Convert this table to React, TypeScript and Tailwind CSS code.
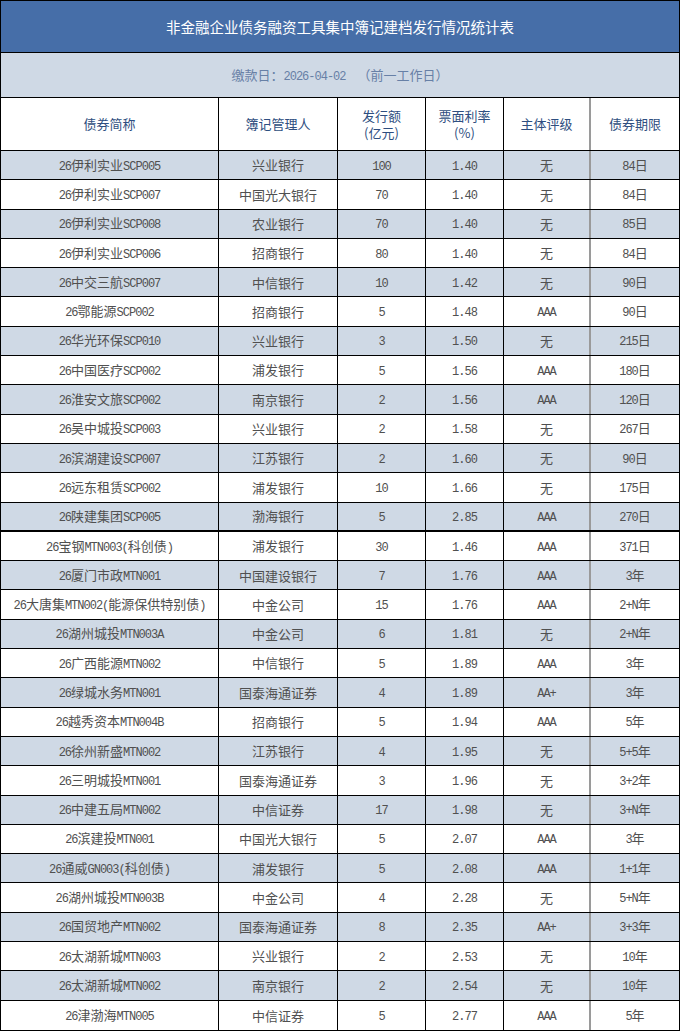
import React from "react";

type Row = [string, string, string, string, string, string];

const rows: Row[] = [
  ["26伊利实业SCP005", "兴业银行", "100", "1.40", "无", "84日"],
  ["26伊利实业SCP007", "中国光大银行", "70", "1.40", "无", "84日"],
  ["26伊利实业SCP008", "农业银行", "70", "1.40", "无", "85日"],
  ["26伊利实业SCP006", "招商银行", "80", "1.40", "无", "84日"],
  ["26中交三航SCP007", "中信银行", "10", "1.42", "无", "90日"],
  ["26鄂能源SCP002", "招商银行", "5", "1.48", "AAA", "90日"],
  ["26华光环保SCP010", "兴业银行", "3", "1.50", "无", "215日"],
  ["26中国医疗SCP002", "浦发银行", "5", "1.56", "AAA", "180日"],
  ["26淮安文旅SCP002", "南京银行", "2", "1.56", "AAA", "120日"],
  ["26吴中城投SCP003", "兴业银行", "2", "1.58", "无", "267日"],
  ["26滨湖建设SCP007", "江苏银行", "2", "1.60", "无", "90日"],
  ["26远东租赁SCP002", "浦发银行", "10", "1.66", "无", "175日"],
  ["26陕建集团SCP005", "渤海银行", "5", "2.85", "AAA", "270日"],
  ["26宝钢MTN003(科创债)", "浦发银行", "30", "1.46", "AAA", "371日"],
  ["26厦门市政MTN001", "中国建设银行", "7", "1.76", "AAA", "3年"],
  ["26大唐集MTN002(能源保供特别债)", "中金公司", "15", "1.76", "AAA", "2+N年"],
  ["26湖州城投MTN003A", "中金公司", "6", "1.81", "无", "2+N年"],
  ["26广西能源MTN002", "中信银行", "5", "1.89", "AAA", "3年"],
  ["26绿城水务MTN001", "国泰海通证券", "4", "1.89", "AA+", "3年"],
  ["26越秀资本MTN004B", "招商银行", "5", "1.94", "AAA", "5年"],
  ["26徐州新盛MTN002", "江苏银行", "4", "1.95", "无", "5+5年"],
  ["26三明城投MTN001", "国泰海通证券", "3", "1.96", "无", "3+2年"],
  ["26中建五局MTN002", "中信证券", "17", "1.98", "无", "3+N年"],
  ["26滨建投MTN001", "中国光大银行", "5", "2.07", "AAA", "3年"],
  ["26通威GN003(科创债)", "浦发银行", "5", "2.08", "AAA", "1+1年"],
  ["26湖州城投MTN003B", "中金公司", "4", "2.28", "无", "5+N年"],
  ["26国贸地产MTN002", "国泰海通证券", "8", "2.35", "AA+", "3+3年"],
  ["26太湖新城MTN003", "兴业银行", "2", "2.53", "无", "10年"],
  ["26太湖新城MTN002", "南京银行", "2", "2.54", "无", "10年"],
  ["26津渤海MTN005", "中信证券", "5", "2.77", "AAA", "5年"],
];

// latin runs get a narrow mono face, like the half-width glyphs of the sheet
const txt = (s: string) =>
  s.split(/([\x00-\x7f]+)/).map((p, i) =>
    /^[\x00-\x7f]+$/.test(p) ? (
      <span key={i} className="font-['Liberation_Mono',monospace] text-[12px] tracking-[-1px]">
        {p}
      </span>
    ) : (
      p
    )
  );

const cols = "grid grid-cols-[218px_119px_88px_78px_87px_88px]";

const Cell: React.FC<{ i: number; children: React.ReactNode }> = ({ i, children }) => (
  <div
    className={
      "flex items-center justify-center text-center " +
      (i === 4 ? "border-r-2 border-r-[#9a9a9a]" : i === 5 ? "" : "border-r border-r-black")
    }
  >
    {children}
  </div>
);

export default function App() {
  return (
    <div className="w-[680px] border border-black font-['Noto_Sans_CJK_SC',sans-serif] text-[13px] text-[#505050]">
      <div className="h-[52px] flex items-center justify-center bg-[#466ea8] border-b border-black text-white text-[14.5px]">
        非金融企业债务融资工具集中簿记建档发行情况统计表
      </div>
      <div className="h-[45px] flex items-center justify-center bg-[#cfd9e5] border-b border-black text-[#6780a6] text-[13px]">
        <span>缴款日：{txt("2026-04-02")}</span>
        <span className="ml-3">（前一工作日）</span>
      </div>
      <div className={cols + " h-[53px] border-b border-black text-[#2e4e80] text-[13px]"}>
        <Cell i={0}>债券简称</Cell>
        <Cell i={1}>簿记管理人</Cell>
        <Cell i={2}>
          <div className="flex flex-col leading-[17px]">
            <span>发行额</span>
            <span>(亿元)</span>
          </div>
        </Cell>
        <Cell i={3}>
          <div className="flex flex-col leading-[17px]">
            <span>票面利率</span>
            <span>(%)</span>
          </div>
        </Cell>
        <Cell i={4}>主体评级</Cell>
        <Cell i={5}>债券期限</Cell>
      </div>
      {rows.map((r, ri) => (
        <div
          key={ri}
          className={
            cols +
            " h-[29.3px] " +
            (ri === 12 ? "border-b-2 " : ri === rows.length - 1 ? "" : "border-b ") +
            "border-black " +
            (ri % 2 === 0 ? "bg-[#cfd9e5]" : "bg-white")
          }
        >
          {r.map((c, ci) => (
            <Cell key={ci} i={ci}>
              <span>{txt(c)}</span>
            </Cell>
          ))}
        </div>
      ))}
    </div>
  );
}
